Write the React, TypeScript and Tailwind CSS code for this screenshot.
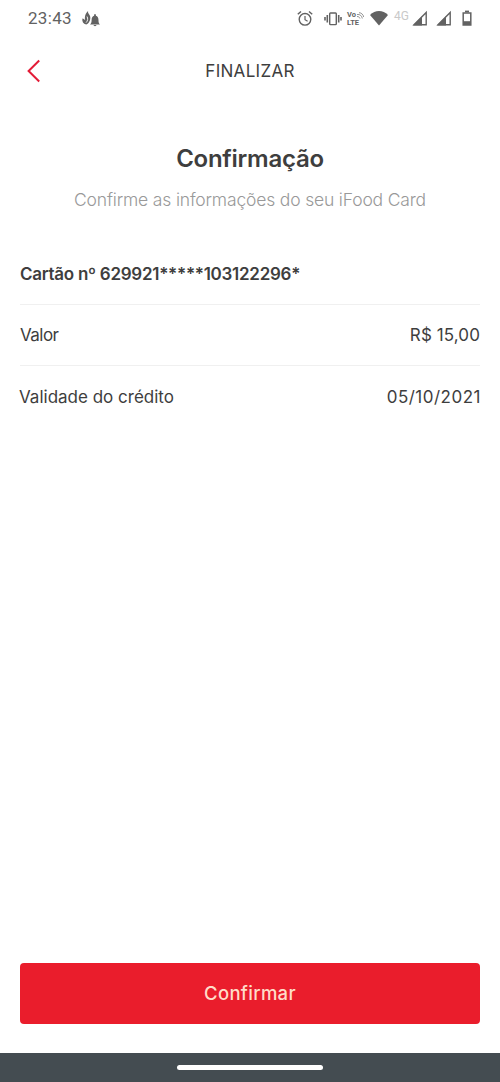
import type { ReactNode } from 'react';

const rows = [
  { label: 'Valor', value: 'R$ 15,00', labelClass: 'tracking-[-0.55px]', valueClass: 'tracking-[0.1px]' },
  { label: 'Validade do crédito', value: '05/10/2021', labelClass: '-ml-px tracking-[0px]', valueClass: '-mr-px tracking-[0.5px]' },
];

function StatusIcon({ width, className, children }: { width: number; className?: string; children: ReactNode }) {
  return (
    <svg width={width} height="20" viewBox={`0 0 ${width} 20`} fill="none" className={`shrink-0 ${className ?? ''}`}>
      {children}
    </svg>
  );
}

function Signal() {
  return (
    <StatusIcon width={16}>
      <path d="M1 16.5 10 7.2v9.3z" fill="#626262" />
      <path d="M2 15.8 14.2 3.4v12.4z" stroke="#626262" strokeWidth="1.4" />
    </StatusIcon>
  );
}

function StatusBar() {
  return (
    <div className="flex h-[38px] items-center pr-[27px] pl-7 text-[#626262]">
      <span className="w-[53px] font-[Roboto,sans-serif] text-[17px] tracking-[0.3px]">23:43</span>
      <StatusIcon width={20}>
        <path d="M7.2 2c-.9 1.8 1.3 3.2 1.9 5.2.8 3.2-.8 6.9-3.9 8.4C2.3 14.8.8 12.3 1.4 9.4c1.3.3 2.3.9 2.8 1.8C3.2 8 4.7 3.7 7.2 2z" fill="#626262" />
        <path d="M6 7.5c1.1 2 .9 4.3-1 6.2" stroke="#fff" strokeWidth=".9" />
        <path d="M9 15.6c1.2-.9 1.6-2.2 1.6-4.3 0-2.4.9-4 2.5-4.5V6c0-1.2 1.8-1.2 1.8 0v.8c1.7.5 2.6 2.1 2.6 4.5 0 2.1.3 3.4 1.5 4.3z" fill="#626262" />
        <path d="M12.5 16h3c-.2 1.5-2.8 1.5-3 0z" fill="#626262" />
      </StatusIcon>

      <div className="ml-auto flex items-center">
        {/* alarm */}
        <StatusIcon width={18}>
          <circle cx="9" cy="10.3" r="5.8" stroke="#626262" strokeWidth="1.4" />
          <path d="M1.8 5.2 5 2.5M16.2 5.2 13 2.5" stroke="#626262" strokeWidth="1.5" />
          <path d="M9 7v3.7l2.6 1.6" stroke="#626262" strokeWidth="1.2" />
        </StatusIcon>
        {/* vibration */}
        <StatusIcon width={20} className="ml-[9px]">
          <rect x="6.7" y="4" width="6.6" height="11.6" rx=".8" stroke="#626262" strokeWidth="1.4" />
          <path d="M4.3 6v7.5M15.7 6v7.5M2 8v3.5M18 8v3.5" stroke="#626262" strokeWidth="1.6" />
        </StatusIcon>
        <div className="ml-1 w-[18px] font-[Roboto,sans-serif] text-[7.5px] leading-[8px] font-bold">
          <div className="flex items-center">
            Vo
            <svg width="7" height="7" viewBox="0 0 7 7" fill="none" className="ml-px">
              <path d="M0 2.5C3 2 5 4 5.3 6.5M2 .7C4.5.7 6.5 3 6.7 5M0 4.5c1.5 0 2.5.7 3 2" stroke="#777" strokeWidth=".8" />
            </svg>
          </div>
          <div>LTE</div>
        </div>
        {/* wifi */}
        <StatusIcon width={20} className="ml-1">
          <path d="M1 6C6 .7 14 .7 19 6l-9 10.5z" fill="#626262" />
        </StatusIcon>
        <span className="ml-[5px] w-[18px] pb-[7px] font-[Roboto,sans-serif] text-[12px] leading-3 text-[#c9c9c9]">4G</span>
        <Signal />
        <div className="ml-2 flex">
          <Signal />
        </div>
        <StatusIcon width={12} className="ml-[9px]">
          <path d="M4 2.5h4" stroke="#626262" strokeWidth="1.8" />
          <path d="M2.2 4h7.6v12H2.2z" stroke="#626262" strokeWidth="1.5" />
          <path d="M2.2 12.2h7.6V16H2.2z" fill="#626262" />
        </StatusIcon>
      </div>
    </div>
  );
}

export default function App() {
  return (
    <div className="flex h-[1082px] w-[500px] flex-col bg-white font-[Inter,sans-serif] text-[#3e3e3e]">
      <StatusBar />

      <header className="grid h-[66px] grid-cols-[1fr_auto_1fr] items-center px-[26px]">
        <button aria-label="Voltar" className="w-4">
          <svg width="15" height="24" viewBox="0 0 15 24" fill="none">
            <path d="M13.2 1.5 2.6 12l10.6 10.5" stroke="#e31c37" strokeWidth="2" />
          </svg>
        </button>
        <h1 className="pt-0.5 text-[17px] tracking-[0.3px]">FINALIZAR</h1>
      </header>

      <main className="flex-1 px-5">
        <h2 className="mt-[37px] text-center text-[24px] leading-9 font-semibold tracking-[-0.25px]">Confirmação</h2>
        <p className="mt-[9px] text-center text-[17.5px] leading-7 font-light tracking-[-0.17px] whitespace-nowrap text-[#999]">
          Confirme as informações do seu iFood Card
        </p>

        <div className="mt-[30px] flex h-[61px] items-center border-b border-[#f0f0f0] pt-0.5 text-[17px] font-semibold tracking-[-0.27px]">
          Cartão nº 629921*****103122296*
        </div>
        {rows.map((row) => (
          <div
            key={row.label}
            className="flex h-[61px] items-center justify-between border-b border-[#f0f0f0] pt-0.5 text-[17px] last:border-b-0"
          >
            <span className={row.labelClass}>{row.label}</span>
            <span className={row.valueClass}>{row.value}</span>
          </div>
        ))}
      </main>

      <div className="px-5 pb-[29px]">
        <button className="h-[61px] w-full rounded bg-[#ea1d2c] text-[18.5px] font-medium tracking-[0.3px] text-[#ffdcc8]">
          Confirmar
        </button>
      </div>

      <div className="flex h-[29px] items-center justify-center bg-[#444c51]">
        <div className="h-[5px] w-[146px] rounded-full bg-white" />
      </div>
    </div>
  );
}
